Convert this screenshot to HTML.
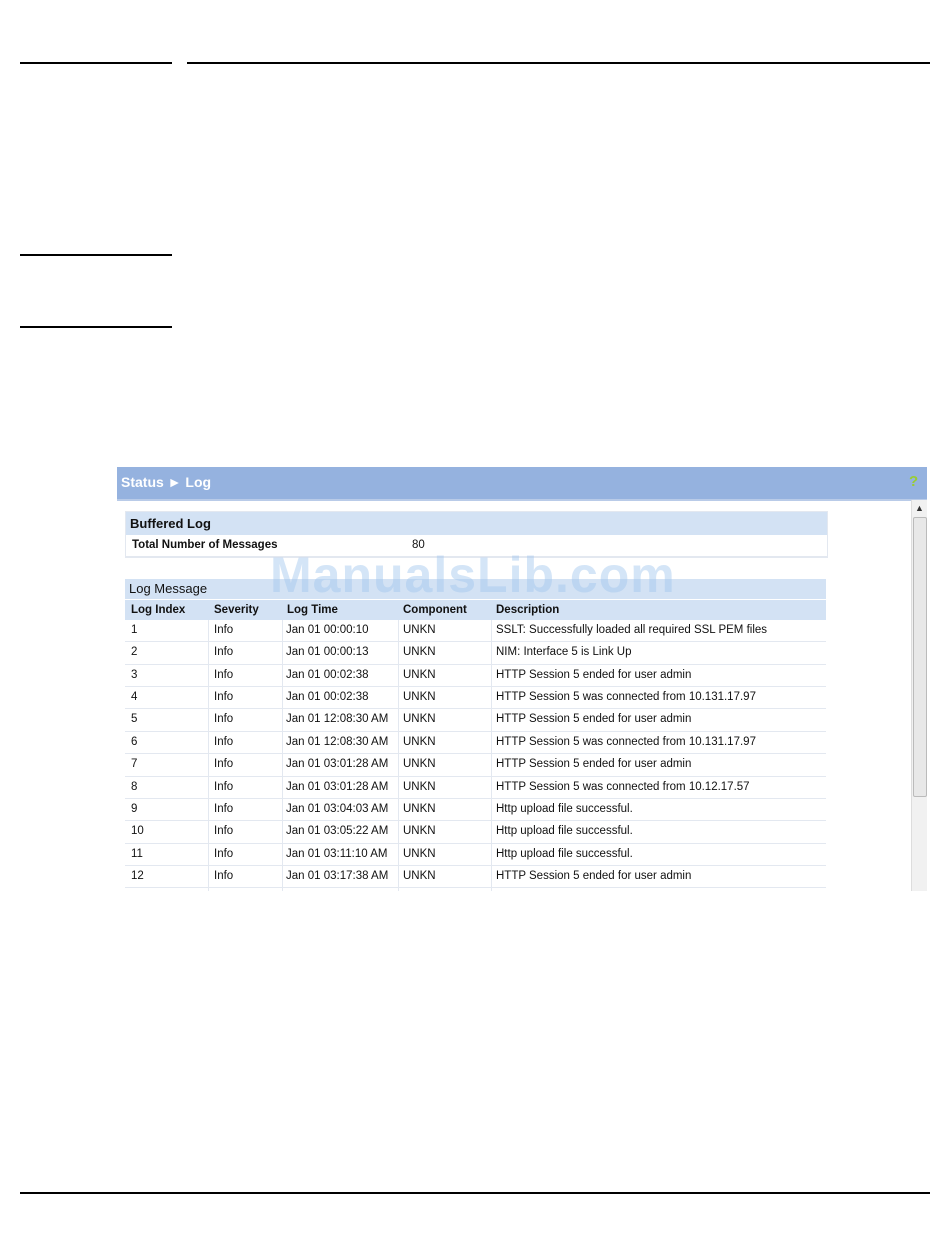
<!DOCTYPE html>
<html><head><style>
body{margin:0;width:950px;height:1254px;background:#fff;position:relative;font-family:"Liberation Sans",Arial,sans-serif;overflow:hidden}
.l{position:absolute;background:#000}
#shot{position:absolute;left:117px;top:467px;width:810px;height:424px;background:#fff;overflow:hidden}
#hdr{position:absolute;left:0;top:0;width:810px;height:32px;background:#95b2df;border-bottom:2px solid #b9cbe8}
#hdr span{position:absolute;left:4px;top:7px;color:#fff;font-weight:bold;font-size:14px}
.t{position:absolute;left:8px;width:701px;font-size:11.5px;color:#111}
.sec{background:#d3e2f4;height:23px;line-height:24px;padding-left:4px;font-weight:bold;font-size:13px}
.row{height:21.36px;line-height:21px;border-bottom:1px solid #e3e8f0;position:relative}
.row span,.ch span{position:absolute;top:0}
.ch{height:20px;line-height:20px;background:#d3e2f4;position:relative;font-weight:bold;font-size:11.5px;border-top:1px solid #fff}
.cb{position:absolute;top:0;bottom:0;width:1px;background:#e3e8f0}
#sb{position:absolute;left:794px;top:33px;width:16px;height:391px;background:#f1f1f1;border-left:1px solid #ddd}
#th{position:absolute;left:796px;top:50px;width:12px;height:278px;background:#e8e8e8;border:1px solid #bbb;border-radius:2px}
#wm{position:absolute;left:270px;top:546px;font-size:50px;font-weight:bold;color:rgba(160,198,238,0.45);letter-spacing:1px}
</style></head><body>
<div class="l" style="left:20px;top:62px;width:152px;height:2px"></div>
<div class="l" style="left:187px;top:62px;width:743px;height:2px"></div>
<div class="l" style="left:20px;top:254px;width:152px;height:2px"></div>
<div class="l" style="left:20px;top:326px;width:152px;height:2px"></div>
<div class="l" style="left:20px;top:1192px;width:910px;height:2px"></div>
<div id="shot">
<div id="hdr"><span>Status ► Log</span><span style="left:792px;top:6px;color:#9c3;font-size:15px">?</span></div>
<div class="t" style="top:44px;border:1px solid #e3e8f0">
<div class="sec">Buffered Log</div>
<div class="row" style="font-weight:bold"><span style="left:6px">Total Number of Messages</span><span style="left:286px;font-weight:normal">80</span></div>
</div>
<div class="t" style="top:112px">
<div class="sec" style="font-weight:normal;height:20px;line-height:20px">Log Message</div>
<div class="ch"><span style="left:6px">Log Index</span><span style="left:89px">Severity</span><span style="left:162px">Log Time</span><span style="left:278px">Component</span><span style="left:371px">Description</span></div>
<div style="position:relative">
<div class="cb" style="left:83px"></div><div class="cb" style="left:157px"></div><div class="cb" style="left:273px"></div><div class="cb" style="left:366px"></div>
<div class="row"><span style="left:6px">1</span><span style="left:89px">Info</span><span style="left:161px">Jan 01 00:00:10</span><span style="left:278px">UNKN</span><span style="left:371px">SSLT: Successfully loaded all required SSL PEM files</span></div>
<div class="row"><span style="left:6px">2</span><span style="left:89px">Info</span><span style="left:161px">Jan 01 00:00:13</span><span style="left:278px">UNKN</span><span style="left:371px">NIM: Interface 5 is Link Up</span></div>
<div class="row"><span style="left:6px">3</span><span style="left:89px">Info</span><span style="left:161px">Jan 01 00:02:38</span><span style="left:278px">UNKN</span><span style="left:371px">HTTP Session 5 ended for user admin</span></div>
<div class="row"><span style="left:6px">4</span><span style="left:89px">Info</span><span style="left:161px">Jan 01 00:02:38</span><span style="left:278px">UNKN</span><span style="left:371px">HTTP Session 5 was connected from 10.131.17.97</span></div>
<div class="row"><span style="left:6px">5</span><span style="left:89px">Info</span><span style="left:161px">Jan 01 12:08:30 AM</span><span style="left:278px">UNKN</span><span style="left:371px">HTTP Session 5 ended for user admin</span></div>
<div class="row"><span style="left:6px">6</span><span style="left:89px">Info</span><span style="left:161px">Jan 01 12:08:30 AM</span><span style="left:278px">UNKN</span><span style="left:371px">HTTP Session 5 was connected from 10.131.17.97</span></div>
<div class="row"><span style="left:6px">7</span><span style="left:89px">Info</span><span style="left:161px">Jan 01 03:01:28 AM</span><span style="left:278px">UNKN</span><span style="left:371px">HTTP Session 5 ended for user admin</span></div>
<div class="row"><span style="left:6px">8</span><span style="left:89px">Info</span><span style="left:161px">Jan 01 03:01:28 AM</span><span style="left:278px">UNKN</span><span style="left:371px">HTTP Session 5 was connected from 10.12.17.57</span></div>
<div class="row"><span style="left:6px">9</span><span style="left:89px">Info</span><span style="left:161px">Jan 01 03:04:03 AM</span><span style="left:278px">UNKN</span><span style="left:371px">Http upload file successful.</span></div>
<div class="row"><span style="left:6px">10</span><span style="left:89px">Info</span><span style="left:161px">Jan 01 03:05:22 AM</span><span style="left:278px">UNKN</span><span style="left:371px">Http upload file successful.</span></div>
<div class="row"><span style="left:6px">11</span><span style="left:89px">Info</span><span style="left:161px">Jan 01 03:11:10 AM</span><span style="left:278px">UNKN</span><span style="left:371px">Http upload file successful.</span></div>
<div class="row"><span style="left:6px">12</span><span style="left:89px">Info</span><span style="left:161px">Jan 01 03:17:38 AM</span><span style="left:278px">UNKN</span><span style="left:371px">HTTP Session 5 ended for user admin</span></div>
<div class="row"></div>
</div></div>
<div id="sb"></div><div id="th"></div>
<div style="position:absolute;left:798px;top:36px;font-size:9px;color:#333">▲</div>
</div>
<div id="wm">ManualsLib.com</div>
</body></html>
